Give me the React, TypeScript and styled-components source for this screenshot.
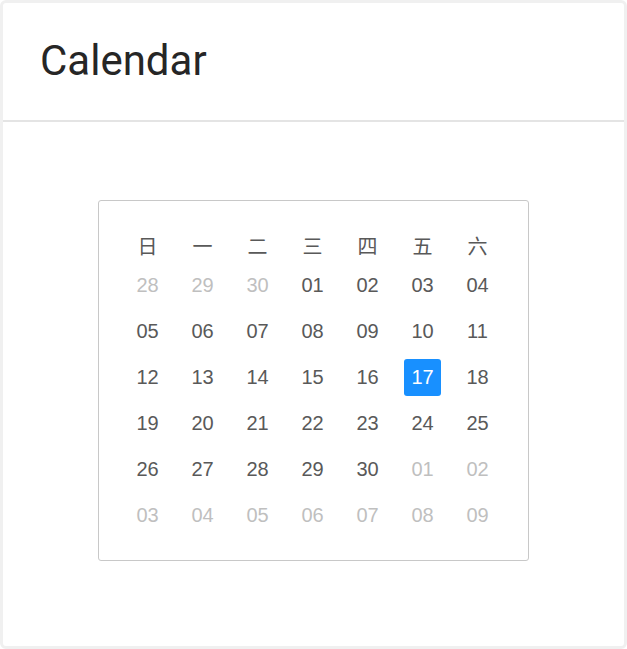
import React from "react";
import styled, { createGlobalStyle } from "styled-components";

const GlobalStyle = createGlobalStyle`
  html, body {
    margin: 0;
    padding: 0;
    background: #ffffff;
  }
  * {
    box-sizing: border-box;
  }
`;

const Card = styled.div`
  width: 627px;
  height: 649px;
  border: 3px solid #f0f0f0;
  border-radius: 6px;
  background: #ffffff;
  display: flex;
  flex-direction: column;
`;

const Header = styled.div`
  height: 119px;
  display: flex;
  align-items: center;
  padding: 0 0 3px 37px;
  border-bottom: 2px solid #e4e4e4;
`;

const Title = styled.h1`
  margin: 0;
  font-family: Roboto, "Liberation Sans", sans-serif;
  font-size: 42px;
  font-weight: 400;
  color: #262626;
`;

const Body = styled.div`
  flex: 1;
  display: flex;
  justify-content: center;
  align-items: flex-start;
  padding: 78px 0 0 0;
`;

const MonthBox = styled.div`
  width: 431px;
  border: 1px solid #c8c8c8;
  border-radius: 3px;
  padding: 28px 0 22px 21px;
  display: flex;
  justify-content: flex-start;
`;

const Grid = styled.div`
  display: grid;
  grid-template-columns: repeat(7, 55px);
  grid-template-rows: 33px repeat(6, 46px);
  font-family: "Liberation Sans", Arial, "Noto Sans CJK SC", sans-serif;
  font-size: 20px;
`;

const WeekDay = styled.div`
  display: flex;
  align-items: center;
  justify-content: center;
  font-family: "Noto Sans CJK SC", sans-serif;
  color: #595959;
`;

const DayCell = styled.div`
  display: flex;
  align-items: center;
  justify-content: center;
`;

const DayNumber = styled.span<{ $muted?: boolean; $selected?: boolean }>`
  width: 37px;
  height: 37px;
  display: flex;
  align-items: center;
  justify-content: center;
  border-radius: 3px;
  color: ${({ $muted, $selected }) =>
    $selected ? "#ffffff" : $muted ? "#bfbfbf" : "#595959"};
  background: ${({ $selected }) => ($selected ? "#1890ff" : "transparent")};
`;

const weekDays = ["日", "一", "二", "三", "四", "五", "六"];

type Day = { label: string; muted: boolean };

const pad = (n: number) => (n < 10 ? `0${n}` : `${n}`);

const buildDays = (): Day[] => {
  const days: Day[] = [];
  [28, 29, 30].forEach((d) => days.push({ label: pad(d), muted: true }));
  for (let d = 1; d <= 30; d++) days.push({ label: pad(d), muted: false });
  for (let d = 1; days.length < 42; d++) days.push({ label: pad(d), muted: true });
  return days;
};

const days = buildDays();
const selected = "17";

export default function App() {
  return (
    <>
      <GlobalStyle />
      <Card>
        <Header>
          <Title>Calendar</Title>
        </Header>
        <Body>
          <MonthBox>
            <Grid>
              {weekDays.map((w) => (
                <WeekDay key={w}>{w}</WeekDay>
              ))}
              {days.map((day, idx) => (
                <DayCell key={idx}>
                  <DayNumber
                    $muted={day.muted}
                    $selected={!day.muted && day.label === selected}
                  >
                    {day.label}
                  </DayNumber>
                </DayCell>
              ))}
            </Grid>
          </MonthBox>
        </Body>
      </Card>
    </>
  );
}
